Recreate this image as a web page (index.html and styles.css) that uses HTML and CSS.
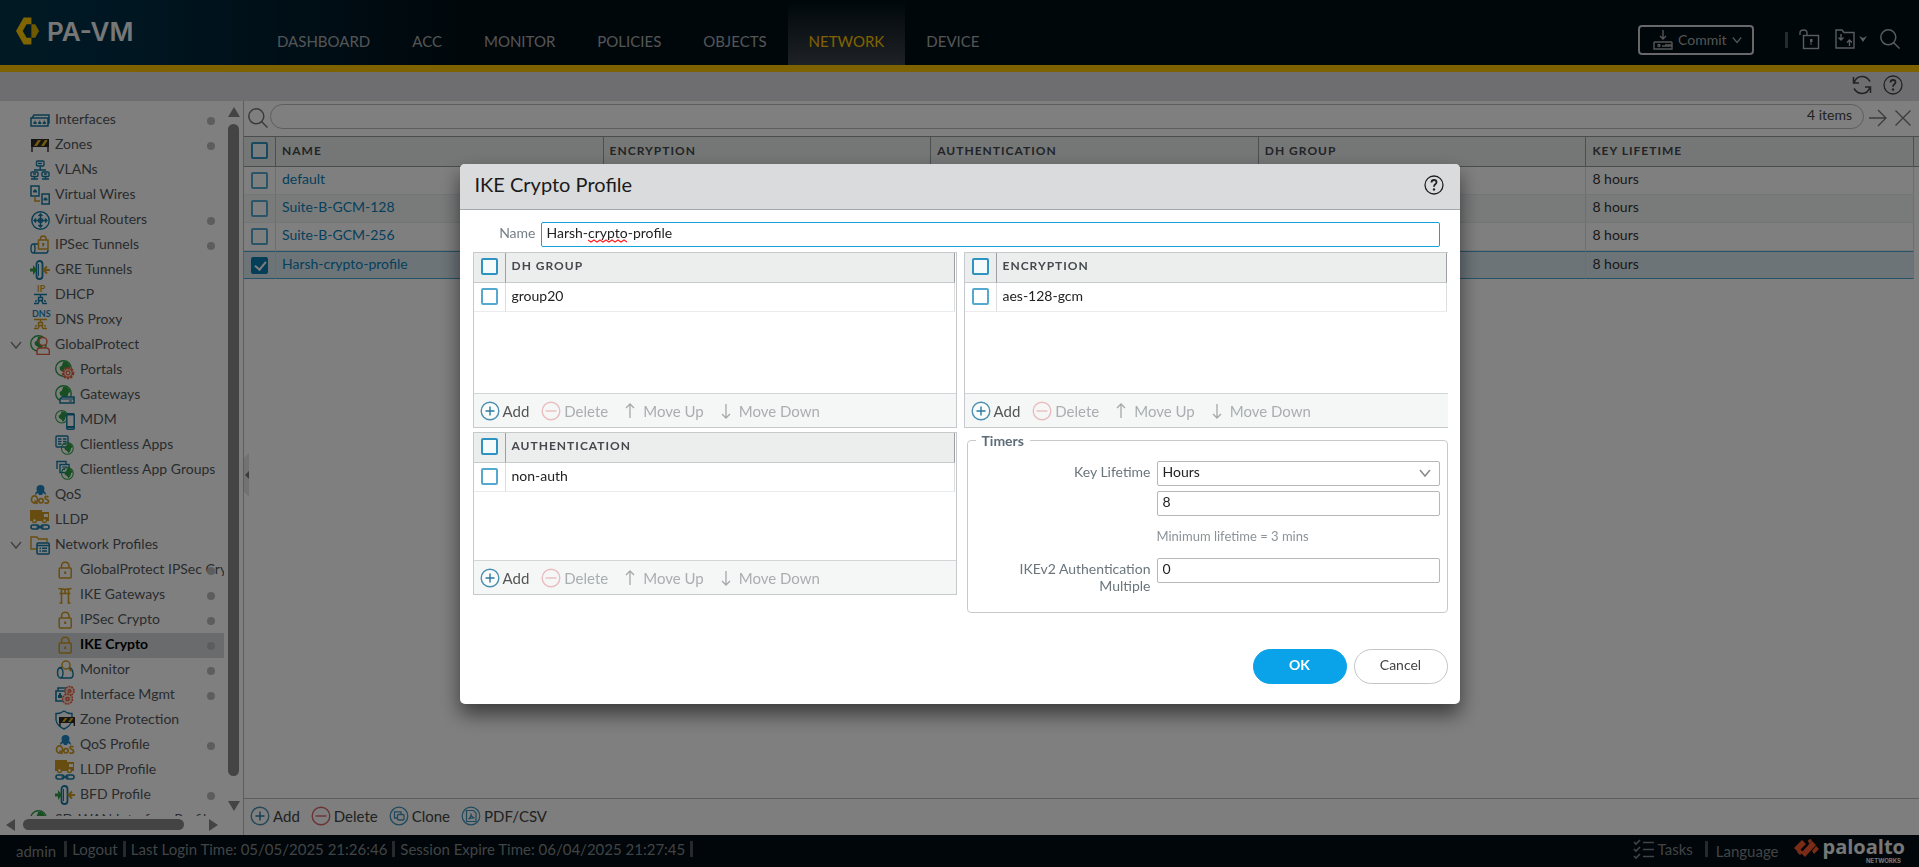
FILE: index.html
```html
<!DOCTYPE html>
<html lang="en">
<head>
<meta charset="utf-8">
<title>PA-VM</title>
<link rel="stylesheet" href="styles.css">
</head>
<body>
<svg class="sprite" aria-hidden="true">
  <symbol id="i-globe" viewBox="0 0 20 20"><circle cx="8.5" cy="8.5" r="7.8" fill="none" stroke="#2e9e46" stroke-width="1.4"/><path d="M8 2c3-1 6 1 7.500 5l-2 1-1 4-2.500 3-2-3-3-2-.5-3 2-1 1-2z" fill="#2e9e46"/></symbol>
  <symbol id="i-port" viewBox="0 0 20 20"><path d="M1 8h17v8H1zM2 8l2-3h15v8l-1 1" fill="none" stroke="#157ba5" stroke-width="1.500"/><path d="M3.500 14v-2h1v-1.500h1V12h1v2zM8.200 14v-2h1v-1.500h1V12h1v2zM12.800 14v-2h1v-1.500h1V12h1v2z" fill="#157ba5"/></symbol>
  <symbol id="i-barrier" viewBox="0 0 20 20"><path d="M1 4h18v8H1z" fill="#2b2b2b"/><path d="M4 11l4-6h3l-4 6zM11 11l4-6h3l-4 6z" fill="#e8b416"/><path d="M2 4v13M18 4v13" stroke="#2b2b2b" stroke-width="1.400"/></symbol>
  <symbol id="i-vlan" viewBox="0 0 20 20"><g fill="none" stroke="#157ba5" stroke-width="1.400"><rect x="6.500" y="1" width="7.500" height="5" rx="1"/><path d="M10.200 6v4M4 10h12M8 3.500h4"/><rect x="1" y="12" width="7" height="4.500" rx="1"/><rect x="12" y="12" width="7" height="4.500" rx="1"/><path d="M1 19h7M12 19h7M4.500 16v3M15.500 16v3M3 14h3M14 14h3"/></g></symbol>
  <symbol id="i-vwire" viewBox="0 0 20 20"><g fill="none" stroke="#157ba5" stroke-width="1.500"><rect x="1" y="1" width="8" height="10"/><rect x="12" y="9" width="7.200" height="10"/></g><path d="M3 7.500v-2h1v-1h2v1h1v2zM13.500 15.500v-2h1v-1h2v1h1v2z" fill="#157ba5"/><path d="M5 12v4h5" fill="none" stroke="#d19a20" stroke-width="1.500"/></symbol>
  <symbol id="i-router" viewBox="0 0 20 20"><g fill="none" stroke="#157ba5" stroke-width="1.400"><circle cx="10.500" cy="10.500" r="8.700"/><path d="M10.500 4v13M4 10.500h13M8.500 6l2-2 2 2M8.500 15l2 2 2-2M6 8.500l-2 2 2 2M15 8.500l2 2-2 2"/><circle cx="10.500" cy="10.500" r="2"/></g></symbol>
  <symbol id="i-tunnel" viewBox="0 0 20 20"><g fill="none" stroke="#157ba5" stroke-width="1.400"><path d="M8 9H3M8 18H3M8 18h8q2 0 2-3M3 9q-2 0-2 4.500T3 18q2 0 2-4.500T3 9"/></g><rect x="8.500" y="5" width="9.500" height="9" fill="none" stroke="#d19a20" stroke-width="1.500"/><path d="M10.500 5V3.500q0-2.500 2.700-2.500T16 3.500V5M13.200 8v3.500M12 9h2.500" fill="none" stroke="#d19a20" stroke-width="1.500"/></symbol>
  <symbol id="i-gre" viewBox="0 0 20 20"><rect x="6.500" y="1" width="6" height="18" rx="3" fill="none" stroke="#157ba5" stroke-width="1.800"/><path d="M8.500 4v12" stroke="#157ba5"/><path d="M0 8.500h3V5l4 5-4 5v-3.500H0z" fill="#2e9e46"/><path d="M20 10h-6M17 6.500L13.500 10l3.500 3.500" fill="none" stroke="#d19a20" stroke-width="2"/></symbol>
  <symbol id="i-node" viewBox="0 0 20 20"><g fill="none" stroke-width="1.400"><path d="M4 9.500h13M10.500 9.500v3M8.500 12.500h4v3h-4zM4 18.500h4l1.500-3M17 18.500h-4l-1.500-3M6.500 15l-1 2M14.500 15l1 2"/></g></symbol>
  <symbol id="i-person" viewBox="0 0 20 20"><circle cx="13" cy="6.500" r="4" fill="#fff" stroke="#e8603c" stroke-width="1.400"/><path d="M7 19.500V16q0-3 3-3h6q3.300 0 3.300 3v3.500z" fill="#fff" stroke="#e8603c" stroke-width="1.400"/></symbol>
  <symbol id="i-gear" viewBox="0 0 20 20"><circle cx="13" cy="13" r="5.200" fill="#f6d9cf" stroke="#e8603c" stroke-width="2.200" stroke-dasharray="2.200 1.200"/><circle cx="13" cy="13" r="4.200" fill="none" stroke="#e8603c"/><circle cx="13" cy="13" r="1.800" fill="#fff" stroke="#e8603c" stroke-width="1.200"/></symbol>
  <symbol id="i-server" viewBox="0 0 20 20"><path d="M5 18v-4l2-2h12v6z" fill="#fff" stroke="#157ba5" stroke-width="1.500"/><path d="M5 14h14M14 16h3" stroke="#157ba5"/></symbol>
  <symbol id="i-phone" viewBox="0 0 20 20"><rect x="11.800" y="3.800" width="7.400" height="15.400" rx="1" fill="#fff" stroke="#157ba5" stroke-width="1.500"/><path d="M12 4.500h7M12 17h7" stroke="#157ba5" stroke-width="2"/></symbol>
  <symbol id="i-app" viewBox="0 0 20 20"><rect x="1" y="1" width="12" height="11" rx="1" fill="#fff" stroke="#157ba5" stroke-width="1.400"/><path d="M3 4h3.500M8 4h3.500M3 6.500h3.500M8 6.500h3.500M3 9h3.500M8 9h3.500" stroke="#157ba5" stroke-width="1.300"/></symbol>
  <symbol id="i-apps" viewBox="0 0 20 20"><path d="M2 9V1.500h9V4" fill="none" stroke="#157ba5" stroke-width="1.400"/><rect x="5" y="4.500" width="9" height="8" fill="#fff" stroke="#157ba5" stroke-width="1.400"/><path d="M7 7h5M7 9.500h3" stroke="#157ba5"/></symbol>
  <symbol id="i-qos" viewBox="0 0 20 20"><path d="M10.500 0a4 4 0 014 4l-.5 2q2 1 2 4l-3-2-1 2h-3l-1-2-3 2q0-3 2-4l-.5-2a4 4 0 014-4z" fill="#1f86bf"/><g fill="none" stroke="#d19a20" stroke-width="1.700"><ellipse cx="4.500" cy="14.500" rx="3" ry="3.600"/><path d="M4.500 15.500l3 3.500M18.500 12q-3-1.500-3.500.5 0 1.500 2 2 2 .8 1.500 2.500-1 2-4 .8"/><circle cx="11" cy="15.800" r="2.200"/></g></symbol>
  <symbol id="i-truck" viewBox="0 0 20 20"><path d="M0 0h12v2h7v9H0z" fill="#d19a20"/><path d="M14 4h4v3h-4z" fill="#fff"/><g fill="#fff" stroke="#d19a20" stroke-width="1.400"><circle cx="4.500" cy="10.500" r="2"/><circle cx="14.500" cy="10.500" r="2"/></g><g fill="none" stroke="#157ba5" stroke-width="1.600"><rect x="1" y="15" width="8" height="4" rx="2"/><rect x="11" y="15" width="8" height="4" rx="2"/><path d="M6.500 17h7"/></g></symbol>
  <symbol id="i-folder" viewBox="0 0 20 20"><path d="M7 14H1V2h6l1.500 2H17v3" fill="none" stroke="#d19a20" stroke-width="1.400"/><rect x="7" y="8" width="12.200" height="11" rx="1" fill="#fff" stroke="#157ba5" stroke-width="1.500"/><path d="M7 10.500h12M9.500 13.200h1.500M12 13.200h5M9.500 16h1.500M12 16h5" stroke="#157ba5" stroke-width="1.500"/></symbol>
  <symbol id="i-lock" viewBox="0 0 20 20"><rect x="4.200" y="8" width="12" height="10" rx="1" fill="none" stroke="#d19a20" stroke-width="1.500"/><path d="M6.500 8V6q0-3.800 3.700-3.800T14 6v2" fill="none" stroke="#d19a20" stroke-width="1.500"/><path d="M10.200 11.500v2.500" stroke="#d19a20" stroke-width="2"/></symbol>
  <symbol id="i-torii" viewBox="0 0 20 20"><path d="M3.500 3.500q7 1.500 13 0M4.500 8.500h11M10 4v4M6.500 4v14M13.500 4v14M4.500 18h3M12.500 18h3" fill="none" stroke="#d19a20" stroke-width="1.600"/></symbol>
  <symbol id="i-monitor" viewBox="0 0 20 20"><path d="M7 7.500H5q-2.500 1-2.500 5T5 18h11q2.500-1 2-5t-3-5.500M5 8q3 0 3 5t-3 5" fill="none" stroke="#157ba5" stroke-width="1.400"/><circle cx="11" cy="5" r="4" fill="none" stroke="#d19a20" stroke-width="1.500"/><path d="M13.500 8l3 3" stroke="#d19a20" stroke-width="1.800"/></symbol>
  <symbol id="i-mgmt" viewBox="0 0 20 20"><path d="M1 6h11v10H1zM3 6V3h9" fill="none" stroke="#157ba5" stroke-width="1.600"/><path d="M3 13v-3h1V8h2v2h1v3z" fill="#157ba5"/><g fill="#f6d9cf" stroke="#e8603c" stroke-width="1.500"><circle cx="14.500" cy="6" r="4.500" stroke-dasharray="2 .8"/><circle cx="12.500" cy="14" r="5" stroke-dasharray="2 .8"/><circle cx="12.500" cy="14" r="1.600"/><circle cx="14.500" cy="6" r="1.300"/></g></symbol>
  <symbol id="i-shield" viewBox="0 0 20 20"><path d="M9 1q4 3 8 2.500V10q-1 6-8 9Q2 16 1 10V3.500Q5 4 9 1z" fill="none" stroke="#157ba5" stroke-width="1.400"/><path d="M4 7h16v6H4z" fill="#2b2b2b"/><path d="M7 12l3-4h2.500l-3 4zM13 12l3-4h2.500l-3 4z" fill="#e8b416"/><path d="M5 7v9M19.300 7v9" stroke="#2b2b2b" stroke-width="1.400"/></symbol>
  <symbol id="i-add" viewBox="0 0 20 20"><circle cx="10" cy="10" r="8.800" fill="#fff" fill-opacity=".5" stroke="#4a8fb0" stroke-width="1.400"/><path d="M5.500 10h9M10 5.500v9" stroke="#2b7ba3" stroke-width="1.400"/></symbol>
  <symbol id="i-del" viewBox="0 0 20 20"><circle cx="10" cy="10" r="8.800" fill="none" stroke="#d9666a" stroke-width="1.400"/><path d="M4.500 10h11" stroke="#d9666a" stroke-width="1.400"/></symbol>
  <symbol id="i-clone" viewBox="0 0 20 20"><g fill="none" stroke="#3f93bd" stroke-width="1.300"><circle cx="10" cy="10" r="8.800"/><path d="M8 12H5.500V5.800h6.500V8"/><rect x="8.500" y="8.500" width="6.500" height="5.500" rx="1"/></g></symbol>
  <symbol id="i-pdf" viewBox="0 0 20 20"><g fill="none" stroke="#3f93bd" stroke-width="1.200"><circle cx="10" cy="10" r="8.800"/><path d="M5.500 4.500h7l2.500 2.500v8.500H5.500zM7.500 13q3-2 2.500-5.500 0 3.500 3.500 4.500-3-.5-6 1z"/></g></symbol>
  <symbol id="i-up" viewBox="0 0 20 20"><path d="M10 17V3M6 7l4-4 4 4" fill="none" stroke="#a4a9ab" stroke-width="1.300"/></symbol>
  <symbol id="i-down" viewBox="0 0 20 20"><path d="M10 3v14M6 13l4 4 4-4" fill="none" stroke="#a4a9ab" stroke-width="1.300"/></symbol>
  <symbol id="i-search" viewBox="0 0 20 20"><circle cx="8.300" cy="8.300" r="7.500" fill="none" stroke="currentColor" stroke-width="1.500"/><path d="M13.500 13.500l6 6" stroke="currentColor" stroke-width="1.500"/></symbol>
  <symbol id="i-help" viewBox="0 0 20 20"><circle cx="10" cy="10" r="9" fill="none" stroke="currentColor" stroke-width="1.300"/><path d="M7.500 7.500q0-2.500 2.500-2.500t2.500 2.300q0 1.200-1.200 2T10 11.800" fill="none" stroke="currentColor" stroke-width="1.800"/><circle cx="10" cy="14.500" r="1.200" fill="currentColor"/></symbol>
  <symbol id="i-chev" viewBox="0 0 12 12"><path d="M1 3l5 6 5-6" fill="none" stroke="currentColor" stroke-width="1.500"/></symbol>
</svg>

<div class="app">
  <header class="top">
    <div class="brand">
      <svg class="brand-mark" viewBox="0 0 26 28"><path d="M8 0h8v7h-5l-4 7 4 7h5v7H8L0 14z" fill="#ffc800"/><path d="M16 7h4l4 7-4 7h-4z" fill="#e0b000"/></svg>
      <span class="brand-name">PA-VM</span>
    </div>
    <nav class="nav">
      <a href="#">DASHBOARD</a><a href="#">ACC</a><a href="#">MONITOR</a><a href="#">POLICIES</a><a href="#">OBJECTS</a><a href="#" class="active">NETWORK</a><a href="#">DEVICE</a>
    </nav>
    <div class="top-tools">
      <button class="commit" type="button"><svg class="ic20" viewBox="0 0 20 20"><g fill="none" stroke="currentColor" stroke-width="1.400"><path d="M10 0v9M7 6l3 3 3-3M1 12h18M1 12v7h18v-3H9"/><circle cx="6" cy="15.500" r="1"/><path d="M12 15h7v-3"/></g></svg>Commit<svg class="ic10" ><use href="#i-chev"/></svg></button>
      <span class="bar"></span>
      <button class="icon-btn" type="button" aria-label="Locks"><svg class="ic20" viewBox="0 0 20 20"><g fill="none" stroke="currentColor" stroke-width="1.400"><rect x="4.500" y="6.500" width="15" height="13"/><path d="M1 6V4q0-3 3.500-3T8 4v2.500"/></g><path d="M11 10h2.500v3h-1v3h-1v-3h-.5z" fill="currentColor"/></svg></button>
      <button class="icon-btn cfg" type="button" aria-label="Configuration"><svg class="ic20" viewBox="0 0 20 20"><g fill="none" stroke="currentColor" stroke-width="1.400"><path d="M1 1h6l2 2.500h10V19H1zM6 5v6M3.500 8.500L6 11l2.500-2.500M14.500 17v-6M12 13.500l2.500-2.500 2.500 2.500"/></g></svg><svg class="ic8" viewBox="0 0 8 8"><path d="M0 1l4 2 4-2-4 6z" fill="currentColor"/></svg></button>
      <button class="icon-btn" type="button" aria-label="Search"><svg class="ic20"><use href="#i-search"/></svg></button>
    </div>
  </header>
  <div class="subbar">
    <button class="icon-btn" type="button" aria-label="Refresh"><svg class="ic20" viewBox="0 0 20 20"><path d="M2 8q2-6.500 8-6.500 5 0 8 5M18 12q-2 6.500-8 6.500-5 0-8-5M1.500 2v6H7M18.500 18v-6H13" fill="none" stroke="currentColor" stroke-width="1.500"/></svg></button>
    <button class="icon-btn" type="button" aria-label="Help"><svg class="ic20"><use href="#i-help"/></svg></button>
  </div>

  <div class="body">
    <aside class="side">
      <div class="side-row">
        <ul class="tree">
          <li class="dot"><svg class="ic20"><use href="#i-port"/></svg><a href="#">Interfaces</a></li>
          <li class="dot"><svg class="ic20"><use href="#i-barrier"/></svg><a href="#">Zones</a></li>
          <li><svg class="ic20"><use href="#i-vlan"/></svg><a href="#">VLANs</a></li>
          <li><svg class="ic20"><use href="#i-vwire"/></svg><a href="#">Virtual Wires</a></li>
          <li class="dot"><svg class="ic20"><use href="#i-router"/></svg><a href="#">Virtual Routers</a></li>
          <li class="dot"><svg class="ic20"><use href="#i-tunnel"/></svg><a href="#">IPSec Tunnels</a></li>
          <li><svg class="ic20"><use href="#i-gre"/></svg><a href="#">GRE Tunnels</a></li>
          <li><svg class="ic20"><use href="#i-node" stroke="#157ba5"/><text class="mini" x="7" y="7" fill="#d19a20">IP</text></svg><a href="#">DHCP</a></li>
          <li><svg class="ic20"><use href="#i-node" stroke="#d19a20"/><text class="mini" x="2" y="7" fill="#1f86bf">DNS</text></svg><a href="#">DNS Proxy</a></li>
          <li class="open"><svg class="ic12"><use href="#i-chev"/></svg><svg class="ic20"><use href="#i-globe"/><use href="#i-person"/></svg><a href="#">GlobalProtect</a></li>
          <li class="sub"><svg class="ic20"><use href="#i-globe"/><use href="#i-gear"/></svg><a href="#">Portals</a></li>
          <li class="sub"><svg class="ic20"><use href="#i-globe"/><use href="#i-server"/></svg><a href="#">Gateways</a></li>
          <li class="sub"><svg class="ic20"><use href="#i-globe" width="16" height="16"/><use href="#i-phone"/></svg><a href="#">MDM</a></li>
          <li class="sub"><svg class="ic20"><use href="#i-app"/><use href="#i-globe" x="6" y="7" width="15" height="15"/></svg><a href="#">Clientless Apps</a></li>
          <li class="sub"><svg class="ic20"><use href="#i-apps"/><use href="#i-globe" x="6" y="7" width="15" height="15"/></svg><a href="#">Clientless App Groups</a></li>
          <li><svg class="ic20"><use href="#i-qos"/></svg><a href="#">QoS</a></li>
          <li><svg class="ic20"><use href="#i-truck"/></svg><a href="#">LLDP</a></li>
          <li class="open"><svg class="ic12"><use href="#i-chev"/></svg><svg class="ic20"><use href="#i-folder"/></svg><a href="#">Network Profiles</a></li>
          <li class="sub dot"><svg class="ic20"><use href="#i-lock"/></svg><a href="#">GlobalProtect IPSec Crypto</a></li>
          <li class="sub dot"><svg class="ic20"><use href="#i-torii"/></svg><a href="#">IKE Gateways</a></li>
          <li class="sub dot"><svg class="ic20"><use href="#i-lock"/></svg><a href="#">IPSec Crypto</a></li>
          <li class="sub dot selected"><svg class="ic20"><use href="#i-lock"/></svg><a href="#">IKE Crypto</a></li>
          <li class="sub dot"><svg class="ic20"><use href="#i-monitor"/></svg><a href="#">Monitor</a></li>
          <li class="sub dot"><svg class="ic20"><use href="#i-mgmt"/></svg><a href="#">Interface Mgmt</a></li>
          <li class="sub"><svg class="ic20"><use href="#i-shield"/></svg><a href="#">Zone Protection</a></li>
          <li class="sub dot"><svg class="ic20"><use href="#i-qos"/></svg><a href="#">QoS Profile</a></li>
          <li class="sub"><svg class="ic20"><use href="#i-truck"/></svg><a href="#">LLDP Profile</a></li>
          <li class="sub dot"><svg class="ic20"><use href="#i-gre"/></svg><a href="#">BFD Profile</a></li>
          <li><svg class="ic20"><use href="#i-globe"/></svg><a href="#">SD-WAN Interface Profile</a></li>
        </ul>
        <div class="vscroll"><span class="tri up"></span><span class="thumb"></span><span class="tri down"></span></div>
      </div>
      <div class="hscroll"><span class="tri left"></span><span class="thumb"></span><span class="tri right"></span></div>
    </aside>

    <main class="main">
      <span class="collapse"><svg viewBox="0 0 6 44"><path d="M0 5l5-5v44l-5-5z" fill="#e4e4e4"/><path d="M5 18v8l-4-4z" fill="#777"/></svg></span>
      <div class="searchbar">
        <svg class="ic20"><use href="#i-search"/></svg>
        <label class="pill"><input type="text" aria-label="Filter"><span>4 items</span></label>
        <svg class="ic20" viewBox="0 0 20 20"><path d="M1 10h17M10 2l8 8-8 8" fill="none" stroke="currentColor" stroke-width="1.300"/></svg>
        <svg class="ic20" viewBox="0 0 20 20"><path d="M2.500 2.500l15 15M17.500 2.500l-15 15" fill="none" stroke="currentColor" stroke-width="1.300"/></svg>
      </div>
      <div class="grid-wrap">
        <table class="grid">
          <thead><tr><th class="ck"><input type="checkbox" aria-label="Select all"></th><th>NAME</th><th>ENCRYPTION</th><th>AUTHENTICATION</th><th>DH GROUP</th><th>KEY LIFETIME</th></tr></thead>
          <tbody>
            <tr><td class="ck"><input type="checkbox" aria-label="default"></td><td><a href="#">default</a></td><td></td><td></td><td></td><td>8 hours</td></tr>
            <tr class="alt"><td class="ck"><input type="checkbox" aria-label="Suite-B-GCM-128"></td><td><a href="#">Suite-B-GCM-128</a></td><td></td><td></td><td></td><td>8 hours</td></tr>
            <tr><td class="ck"><input type="checkbox" aria-label="Suite-B-GCM-256"></td><td><a href="#">Suite-B-GCM-256</a></td><td></td><td></td><td></td><td>8 hours</td></tr>
            <tr class="picked"><td class="ck"><input type="checkbox" aria-label="Harsh-crypto-profile" checked></td><td><a href="#">Harsh-crypto-profile</a></td><td></td><td></td><td></td><td>8 hours</td></tr>
          </tbody>
        </table>
      </div>
      <div class="actions">
        <button type="button"><svg class="ic20"><use href="#i-add"/></svg>Add</button>
        <button type="button"><svg class="ic20"><use href="#i-del"/></svg>Delete</button>
        <button type="button"><svg class="ic20"><use href="#i-clone"/></svg>Clone</button>
        <button type="button"><svg class="ic20"><use href="#i-pdf"/></svg>PDF/CSV</button>
      </div>
    </main>
  </div>

  <footer class="foot">
    <span class="who">admin</span><span class="bar"></span><a href="#">Logout</a><span class="bar"></span><span>Last Login Time: 05/05/2025 21:26:46</span><span class="bar"></span><span>Session Expire Time: 06/04/2025 21:27:45</span><span class="bar"></span>
    <div class="foot-right">
      <a href="#" class="tasks"><svg class="ic20" viewBox="0 0 20 20"><path d="M0 3l2 2 4-4M0 10l2 2 4-4M0 17l2 2 4-4M9 3.500h11M9 10.500h11M9 17.500h11" fill="none" stroke="currentColor" stroke-width="1.700"/></svg>Tasks</a>
      <span class="bar"></span>
      <a href="#" class="who">Language</a>
      <div class="palo">
        <svg viewBox="0 0 26 20"><g fill="#f4582d"><path d="M1 10l8-8 4 4-8 8zM8 15L19 3l4 4-11 12z"/><path d="M4 14l3-3 3 3-3 3zM15 2l3-1 1 2-3 3zM19 13l4-5 3 3-5 5z"/></g></svg>
        <span class="palo-text"><b>paloalto</b><small>NETWORKS</small></span>
      </div>
    </div>
  </footer>
</div>

<div class="mask">
  <form class="dialog" role="dialog" aria-label="IKE Crypto Profile">
    <div class="dialog-head"><h1>IKE Crypto Profile</h1><button class="icon-btn" type="button" aria-label="Help"><svg class="ic20"><use href="#i-help"/></svg></button></div>
    <div class="dialog-body">
      <div class="name-row">
        <label for="name">Name</label>
        <div class="name-box"><input class="field" id="name" type="text" value="Harsh-crypto-profile">
        <svg class="squiggle" viewBox="0 0 39 4"><path d="M0 1l3 2 3-2 3 2 3-2 3 2 3-2 3 2 3-2 3 2 3-2 3 2 3-2 3 2" fill="none" stroke="#f22" stroke-width="1.200"/></svg></div>
      </div>
      <div class="cols">
        <div class="col">
          <section class="panel tall">
            <table class="grid"><thead><tr><th class="ck"><input type="checkbox" aria-label="All DH groups"></th><th>DH GROUP</th></tr></thead><tbody><tr><td class="ck"><input type="checkbox" aria-label="group20"></td><td>group20</td></tr></tbody></table>
            <div class="actions"><button type="button"><svg class="ic20"><use href="#i-add"/></svg>Add</button><button type="button" disabled><svg class="ic20"><use href="#i-del"/></svg>Delete</button><button type="button" class="move" disabled><svg class="ic20"><use href="#i-up"/></svg>Move Up</button><button type="button" class="move" disabled><svg class="ic20"><use href="#i-down"/></svg>Move Down</button></div>
          </section>
          <section class="panel">
            <table class="grid"><thead><tr><th class="ck"><input type="checkbox" aria-label="All authentication"></th><th>AUTHENTICATION</th></tr></thead><tbody><tr><td class="ck"><input type="checkbox" aria-label="non-auth"></td><td>non-auth</td></tr></tbody></table>
            <div class="actions"><button type="button"><svg class="ic20"><use href="#i-add"/></svg>Add</button><button type="button" disabled><svg class="ic20"><use href="#i-del"/></svg>Delete</button><button type="button" class="move" disabled><svg class="ic20"><use href="#i-up"/></svg>Move Up</button><button type="button" class="move" disabled><svg class="ic20"><use href="#i-down"/></svg>Move Down</button></div>
          </section>
        </div>
        <div class="col">
          <section class="panel tall flush">
            <table class="grid"><thead><tr><th class="ck"><input type="checkbox" aria-label="All encryption"></th><th>ENCRYPTION</th></tr></thead><tbody><tr><td class="ck"><input type="checkbox" aria-label="aes-128-gcm"></td><td>aes-128-gcm</td></tr></tbody></table>
            <div class="actions"><button type="button"><svg class="ic20"><use href="#i-add"/></svg>Add</button><button type="button" disabled><svg class="ic20"><use href="#i-del"/></svg>Delete</button><button type="button" class="move" disabled><svg class="ic20"><use href="#i-up"/></svg>Move Up</button><button type="button" class="move" disabled><svg class="ic20"><use href="#i-down"/></svg>Move Down</button></div>
          </section>
          <fieldset class="timers">
            <legend>Timers</legend>
            <div class="timer-grid">
              <label for="unit">Key Lifetime</label>
              <div class="select"><select class="field" id="unit"><option>Hours</option></select><svg class="ic12"><use href="#i-chev"/></svg></div>
              <input class="field second" type="text" value="8" aria-label="Key lifetime value">
              <p class="hint second">Minimum lifetime = 3 mins</p>
              <label for="mult">IKEv2 Authentication Multiple</label>
              <input class="field" id="mult" type="text" value="0">
            </div>
          </fieldset>
        </div>
      </div>
      <div class="buttons"><button type="submit" class="btn ok">OK</button><button type="button" class="btn">Cancel</button></div>
    </div>
  </form>
</div>
</body>
</html>
```
FILE: styles.css
```css
* { box-sizing: border-box; }
body { margin: 0; font: 14px/18px Lato, "Liberation Sans", sans-serif; color: #333; background: #fff; overflow: hidden; }
button, input, select { font: inherit; color: inherit; }
button { background: none; border: 0; padding: 0; }
a { color: inherit; text-decoration: none; }
.sprite { position: absolute; width: 0; height: 0; }
.ic20 { width: 20px; height: 20px; flex: none; display: block; overflow: visible; }
.ic12 { width: 12px; height: 12px; flex: none; }
.ic10 { width: 10px; height: 10px; flex: none; }
.ic8 { width: 8px; height: 8px; flex: none; }
.icon-btn { display: flex; align-items: center; }

.app { height: 100vh; display: flex; flex-direction: column; }

.top { height: 72px; flex: none; display: flex; border-bottom: 7px solid #ffc400; background: linear-gradient(90deg, #003346 0, #003048 90px, #000e16 470px); }
.brand { width: 256px; flex: none; display: flex; align-items: flex-start; gap: 6px; padding: 17px 0 0 16px; }
.brand-mark { width: 25px; height: 28px; }
.brand-name { font: 600 26px/30px Inter, sans-serif; color: #eee; }
.nav { display: flex; font-size: 15px; line-height: 20px; color: #a9abad; }
.nav a { padding: 31px 21px 0; }
.nav .active { color: #ffc400; background: linear-gradient(#000e16, #3d444b); }
.top-tools { margin-left: auto; display: flex; align-items: flex-start; padding: 25px 19px 0 0; color: #b5b8ba; }
.top-tools .icon-btn { margin: 4px 0 0 16px; }
.top-tools .bar + .icon-btn { margin-left: 11px; }
.top-tools .cfg { gap: 4px; }
.top-tools .cfg + .icon-btn { margin-left: 13px; }
.commit { display: flex; align-items: center; gap: 5px; width: 116px; height: 30px; margin-right: 31px; padding: 0 0 0 13px; border: 2px solid #d0d0d0; border-radius: 4px; color: #aaa; }
.bar { width: 3px; height: 16px; background: #4d5458; flex: none; }
.top-tools .bar { margin-top: 7px; }

.subbar { height: 29px; flex: none; display: flex; justify-content: flex-end; align-items: center; gap: 11px; padding: 0 16px 3px 0; background: #dcdde1; color: #444; }

.body { flex: 1; min-height: 0; display: flex; }
.side { width: 244px; flex: none; display: flex; flex-direction: column; border-right: 1px solid #bbb; }
.side-row { flex: 1; min-height: 0; display: flex; }
.tree { flex: 1; min-width: 0; list-style: none; margin: 0; padding: 7px 0 0; overflow: hidden; color: #53585c; }
.tree li { position: relative; display: flex; align-items: center; gap: 5px; height: 25px; padding: 0 0 1px 30px; }
.tree li a { padding-bottom: 3px; white-space: nowrap; overflow: hidden; color: #53585c; }
.tree .sub { padding-left: 55px; }
.tree .open { padding-left: 10px; gap: 8px; color: #888; }
.tree .open a { margin-left: -3px; }
.tree .selected { background: #d4d6d9; }
.tree .selected a { color: #000; font-weight: 700; }
.tree .dot::after { content: ""; position: absolute; left: 207px; top: 9px; width: 8px; height: 8px; border-radius: 50%; background: #bababa; }
.mini { font: 700 9px/9px Lato, sans-serif; }
.vscroll { width: 19px; flex: none; display: flex; flex-direction: column; align-items: center; gap: 7px; padding: 6px 0 5px; }
.thumb { background: #888; border-radius: 6px; }
.vscroll .thumb { width: 11px; flex: 1; margin-bottom: 18px; }
.hscroll { height: 19px; flex: none; display: flex; align-items: center; gap: 8px; padding: 0 25px 2px 6px; }
.hscroll .thumb { height: 11px; flex: 1; margin-right: 17px; }
.tri { border: 6px solid transparent; flex: none; }
.up { border-bottom: 10px solid #888; border-top: 0; }
.down { border-top: 10px solid #888; border-bottom: 0; }
.left { border-right: 9px solid #888; border-left: 0; }
.right { border-left: 9px solid #888; border-right: 0; }

.main { position: relative; flex: 1; min-width: 0; display: flex; flex-direction: column; }
.collapse { position: absolute; left: 0; top: 352px; width: 6px; height: 44px; }
.searchbar { display: flex; align-items: center; gap: 4px; height: 35px; flex: none; padding: 0 6px 2px 4px; color: #777; }
.pill { flex: 1; display: flex; align-items: center; height: 25px; margin: 0 0 2px -2px; padding: 0 11px 3px; border: 1px solid #bbb; border-radius: 13px; color: #444; }
.pill input { flex: 1; border: 0; outline: 0; background: none; }
.pill + svg { margin-right: 1px; }
.grid-wrap { flex: 1; min-height: 0; border-top: 1px solid #999; background: linear-gradient(#ebeeed 29px, #999 29px 30px, transparent 30px); }
.grid-wrap .grid { width: calc(100% - 5px); }
.grid { width: 100%; border-collapse: separate; border-spacing: 0; table-layout: fixed; }
.grid th, .grid td { text-align: left; padding: 0 6px; }
.grid th { height: 30px; padding-bottom: 2px; font-size: 12px; font-weight: 700; letter-spacing: 1px; color: #45494d; background: #ebeeed; border-right: 1px solid #999fa3; border-bottom: 1px solid #999; }
.grid td { height: 28px; padding-bottom: 3px; border-right: 1px solid #ddd; border-bottom: 1px solid #e9ebec; color: #333; }
.grid td a { color: #0a80b8; }
.grid .ck { width: 32px; padding: 0 0 0 7px; }
.grid th.ck { padding-bottom: 2px; }
.alt td { background: #f2f7f7; }
.grid .picked td { background: #d9e9f1; border-top: 1px solid #4fa7d0; border-bottom: 1px solid #4fa7d0; }
.grid input { appearance: none; display: block; width: 17px; height: 17px; margin: 0; border: 2px solid #55a9cf; border-radius: 2px; background: #fff; }
.grid th input { border-color: #2e93c0; background: #f5fafa; }
.grid input:checked { background: #0a7cb0; border-color: #0a7cb0; }
.grid input:checked::after { content: ""; display: block; width: 5px; height: 9px; margin: 0 0 0 4px; border: solid #fff; border-width: 0 2px 2px 0; transform: rotate(40deg); }

.actions { display: flex; align-items: center; gap: 11px; height: 37px; flex: none; padding: 0 6px 2px; border-top: 1px solid #bbb; background: #fafcfb; font-size: 15px; color: #444; }
.actions button { display: flex; align-items: center; gap: 3px; line-height: 20px; }

.foot { height: 32px; flex: none; display: flex; align-items: center; gap: 5px; padding: 0 14px 4px 16px; background: #000c12; color: #83888b; font-size: 15px; }
.foot .who { padding-top: 4px; }
.foot .who + .bar { margin-left: 3px; }
.foot-right { margin-left: auto; display: flex; align-items: center; gap: 8px; }
.tasks { display: flex; align-items: center; gap: 4px; margin-right: 4px; }
.palo { display: flex; gap: 4px; margin-left: 6px; padding-top: 4px; }
.palo svg { width: 26px; height: 20px; }
.palo-text { display: flex; flex-direction: column; color: #eee; }
.palo-text b { font: 700 20px/18px "Open Sans", sans-serif; }
.palo-text small { align-self: flex-end; margin-top: 1px; font: 700 6px/7px Inter, sans-serif; padding-right: 4px; }

.mask { position: fixed; inset: 0; display: grid; place-items: center; background: rgba(0, 0, 0, .5); }
.dialog { width: 1000px; max-width: 100%; border-radius: 5px; background: #fff; color: #222; box-shadow: 0 10px 20px rgba(0, 0, 0, .55); overflow: hidden; }
.dialog-head { display: flex; align-items: center; justify-content: space-between; height: 46px; padding: 0 16px 2px 15px; background: #dadbdd; border-bottom: 1px solid #a3a8ad; }
.dialog-head h1 { margin: 0; padding-bottom: 2px; font-size: 20px; line-height: 24px; font-weight: 400; color: #1a1a1a; }
.dialog-body { padding: 12px 12px 20px 13px; }
.name-row { display: flex; align-items: center; padding-right: 8px; color: #747f86; }
.name-row label { width: 68px; padding: 0 5px 2px 0; text-align: right; }
.name-box { position: relative; flex: 1; }
.field { width: 100%; height: 25px; padding: 0 5px 3px; border: 1px solid #b4b8bb; border-radius: 2px; background: #fff; color: #222; outline: 0; display: block; }
.name-box .field { border-color: #13a2de; }
.squiggle { position: absolute; left: 47px; top: 17px; width: 39px; height: 4px; }
.cols { display: grid; grid-template-columns: 1fr 1fr; gap: 7px; margin-top: 5px; }
.col { display: flex; flex-direction: column; gap: 4px; }
.panel { display: flex; flex-direction: column; height: 163px; border: 1px solid #c6cacc; }
.panel.tall { height: 176px; }
.panel.flush { border-right: 0; }
.panel .grid { width: calc(100% - 1px); }
.panel .grid td { height: 29px; padding-bottom: 2px; color: #222; }
.panel .grid td.ck { padding-bottom: 0; }
.panel .grid th { border-bottom-color: #c6cacc; }
.panel .actions { margin-top: auto; height: 34px; border-top-color: #d3d6d8; background: #f5f7f7; color: #555; padding: 1px 6px 0; gap: 12px; }
.panel .actions button:disabled { color: #aaaeb0; }
.panel .actions button:disabled svg { opacity: .4; }
.panel .actions button.move svg { opacity: 1; }
.timers { margin: 0 0 0 3px; padding: 0 7px 18px; border: 1px solid #c6cacc; border-radius: 4px; }
.timers legend { margin-left: 1px; padding: 0 6px; font-weight: 700; color: #5d6d78; }
.timer-grid { display: grid; grid-template-columns: 1fr 283px; column-gap: 6px; row-gap: 5px; padding-top: 11px; color: #6a757c; }
.timer-grid label { justify-self: end; text-align: right; max-width: 150px; line-height: 17px; padding-top: 2px; }
.second { grid-column: 2; }
.select { display: grid; align-items: center; }
.select select { appearance: none; grid-area: 1 / 1; }
.select svg { grid-area: 1 / 1; justify-self: end; margin-right: 9px; color: #888; pointer-events: none; }
.hint { margin: 6px 0 8px; font-size: 13px; color: #8c9398; }
.buttons { display: flex; justify-content: flex-end; gap: 7px; margin-top: 36px; }
.btn { width: 94px; height: 35px; padding-bottom: 2px; border: 1px solid #c1c5c8; border-radius: 18px; color: #444; }
.btn.ok { background: #0aa3ea; border-color: #0aa3ea; color: #fff; font-weight: 700; }
```
